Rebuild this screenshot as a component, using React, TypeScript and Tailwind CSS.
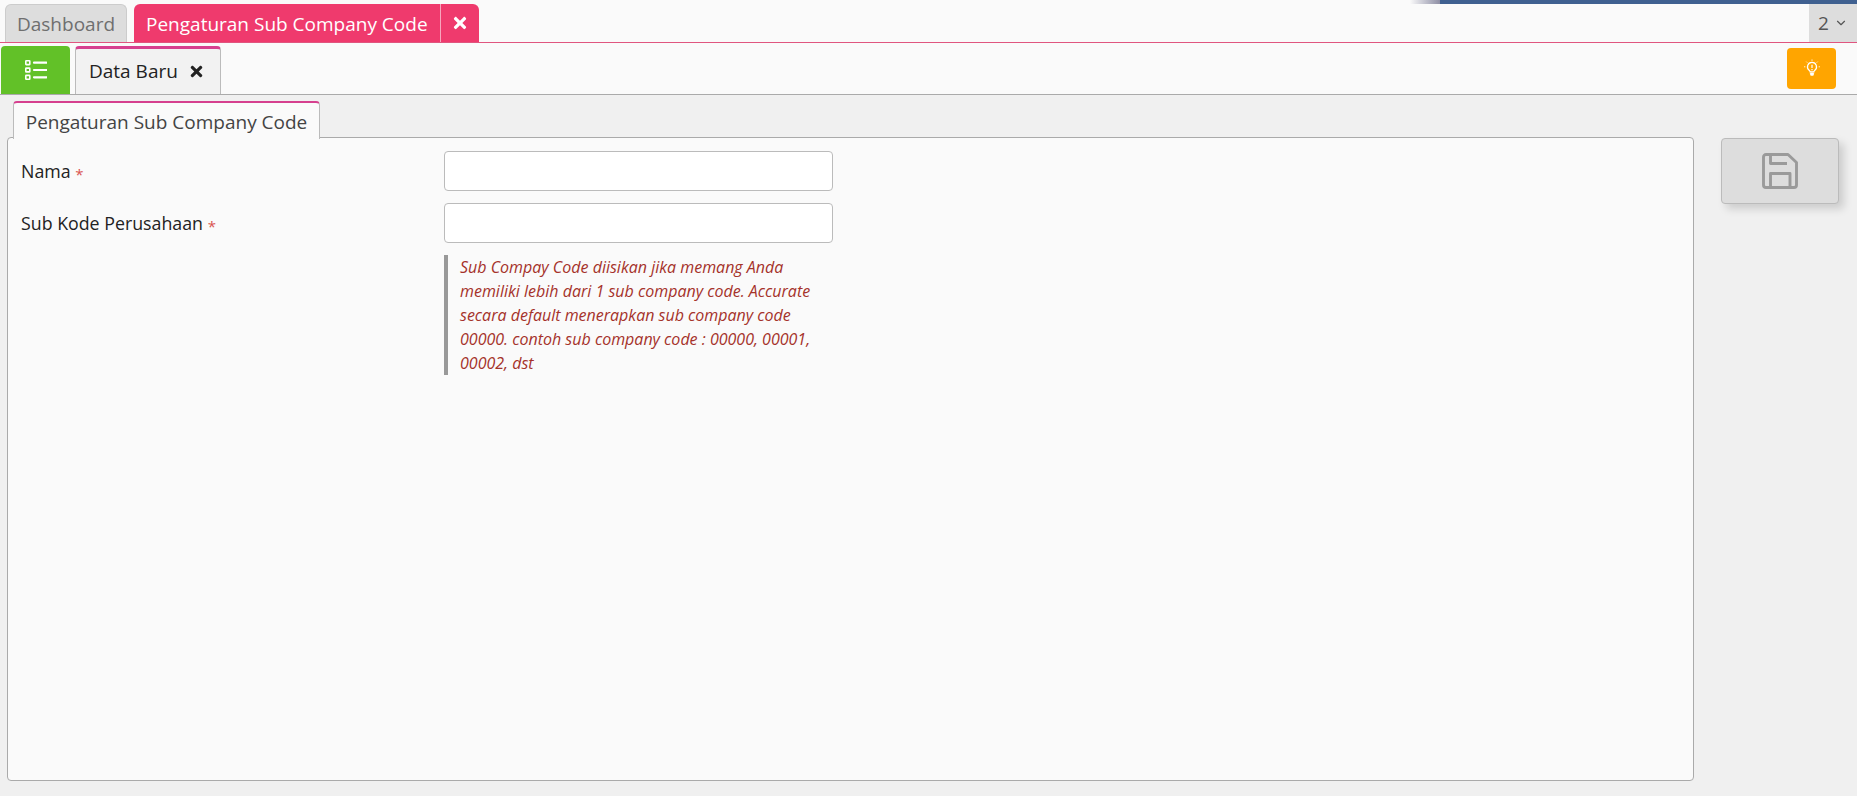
import { FaTimes } from 'react-icons/fa';
import { ChevronDown } from 'lucide-react';

function ListIcon() {
  return (
    <svg width="22" height="20" viewBox="0 0 22 20" fill="none" stroke="#fff">
      <rect x="0.800" y="0.800" width="4" height="3.800" rx="0.500" strokeWidth="1.600" />
      <rect x="0.800" y="8.100" width="4" height="3.800" rx="0.500" strokeWidth="1.600" />
      <rect x="0.800" y="15.400" width="4" height="3.800" rx="0.500" strokeWidth="1.600" />
      <path d="M9 2.700h12.500M9 10h12.500M9 17.300h12.500" strokeWidth="2.200" strokeLinecap="round" />
    </svg>
  );
}

function BulbIcon() {
  return (
    <svg width="18" height="19" viewBox="0 0 18 20" fill="none" stroke="#fff">
      <path d="M9 3.500a4.700 4.700 0 0 0-2.800 8.500c.6.500.8 1 .8 1.600h4c0-.6.200-1.100.8-1.600A4.700 4.700 0 0 0 9 3.500z" strokeWidth="1.300" />
      <path d="M7.200 14.800h3.600l-.5 2.400H7.700z" fill="#fff" strokeWidth="0.800" />
      <path d="M9 6v3.600M9 10.600v1.200" strokeWidth="1.300" />
      <path d="M9 .5v1.400M3 2.800l1 1M15 2.800l-1 1M.6 8.200H2M16 8.200h1.400" strokeWidth="0.900" />
    </svg>
  );
}

function SaveIcon() {
  return (
    <svg width="36" height="36" viewBox="0 0 36 36" fill="none" stroke="#9a9a9a" strokeWidth="2.900" strokeLinejoin="round">
      <path d="M4 1.500h22l8.500 8V32a2.500 2.500 0 0 1-2.500 2.500H4A2.500 2.500 0 0 1 1.500 32V4A2.500 2.500 0 0 1 4 1.500z" />
      <path d="M8.500 1.500v9h16.500" />
      <path d="M8.500 34.500V20.500h19.500v14" />
    </svg>
  );
}

export default function App() {
  return (
    <div className="relative flex h-[796px] flex-col overflow-hidden bg-[#f0f0f0] font-['Open_Sans','Noto_Sans',sans-serif] text-[#222]">
      {/* strip of the page behind, cut off at the top */}
      <div className="absolute right-0 top-0 h-1 w-[417px] bg-[#3f6090]" />
      <div className="absolute right-[417px] top-0 h-1 w-[30px] bg-gradient-to-r from-[#fafafa] to-[#8f8fa5]" />

      <div className="flex h-[43px] shrink-0 items-end border-b border-[#e0557f] bg-[#fafafa] pl-[5px]">
        <div className="flex h-[38px] w-[122px] items-center justify-center rounded-t-[6px] border border-b-0 border-[#ccc] bg-[#ddd] pt-[2px] text-[19px] text-[#6f6f6f]">
          Dashboard
        </div>
        <div className="ml-[7px] flex h-[38px] w-[345px] items-center rounded-t-[6px] bg-[#ef3a6d] text-[19px] text-white">
          <span className="flex h-full w-[306px] items-center whitespace-nowrap pl-3 pt-[2px]">Pengaturan Sub Company Code</span>
          <span className="flex h-full flex-1 items-center justify-center border-l border-[#f7a5bd]">
            <FaTimes className="h-[18px] w-[18px]" />
          </span>
        </div>
        <div className="ml-auto flex h-[38px] w-[48px] items-center justify-center gap-[5px] bg-[#ddd] text-[19px] text-[#555]">
          2
          <ChevronDown className="h-[14px] w-[14px]" strokeWidth={2} />
        </div>
      </div>

      <div className="flex h-[52px] shrink-0 items-end border-b border-[#aaa] bg-[#fafafa] pl-px pr-[21px]">
        <div className="flex h-[48px] w-[69px] items-center justify-center rounded-t-[4px] bg-[#62c128]">
          <ListIcon />
        </div>
        <div className="ml-[5px] flex h-[48px] w-[146px] items-center gap-[10px] whitespace-nowrap rounded-t-[4px] border border-b-0 border-t-[3px] border-[#bbb] border-t-[#d6408f] bg-[#f2f2f2] pl-[13px] text-[19px] text-[#222]">
          Data Baru
          <FaTimes className="h-[17px] w-[17px]" />
        </div>
        <div className="mb-[5px] ml-auto flex h-[41px] w-[49px] items-center justify-center rounded-[4px] bg-[#ffa500]">
          <BulbIcon />
        </div>
      </div>

      <div className="flex flex-1 pb-[15px] pl-[7px] pr-[18px] pt-[6px]">
        <div className="flex w-[1687px] flex-col">
          <div className="z-10 mb-[-1px] ml-[6px] flex h-[38px] w-[307px] items-center justify-center whitespace-nowrap rounded-t-[4px] border border-b-0 border-t-[2px] border-[#bbb] border-t-[#d6408f] bg-[#fafafa] pt-[3px] text-[19px] text-[#444]">
            Pengaturan Sub Company Code
          </div>
          <div className="mt-[-1px] flex-1 rounded-[4px] border border-[#aaa] bg-[#fafafa] pl-[13px] pt-[13px]">
            <div className="flex h-[40px] items-center">
              <label className="w-[423px] text-[17.800px] text-[#222]">
                Nama <span className="relative top-[2px] text-[15px] text-[#d9534f]">*</span>
              </label>
              <input className="h-[40px] w-[389px] rounded-[4px] border border-[#bbb] bg-white" />
            </div>
            <div className="mt-[12px] flex h-[40px] items-center">
              <label className="w-[423px] text-[17.800px] text-[#222]">
                Sub Kode Perusahaan <span className="relative top-[2px] text-[15px] text-[#d9534f]">*</span>
              </label>
              <input className="h-[40px] w-[389px] rounded-[4px] border border-[#bbb] bg-white" />
            </div>
            <p className="ml-[423px] mt-[12px] w-[389px] border-l-[4px] border-[#999] pl-3 text-[16px] italic leading-[24px] text-[#a5322a]">
              Sub Compay Code diisikan jika memang Anda memiliki lebih dari 1 sub company code. Accurate secara default menerapkan sub company code 00000. contoh sub company code : 00000, 00001, 00002, dst
            </p>
          </div>
        </div>
        <div className="ml-[27px] mt-[37px] flex h-[66px] w-[118px] items-center justify-center rounded-[4px] border border-[#bbb] bg-[#ddd] shadow-[5px_5px_8px_rgba(0,0,0,0.15)]">
          <SaveIcon />
        </div>
      </div>
    </div>
  );
}
